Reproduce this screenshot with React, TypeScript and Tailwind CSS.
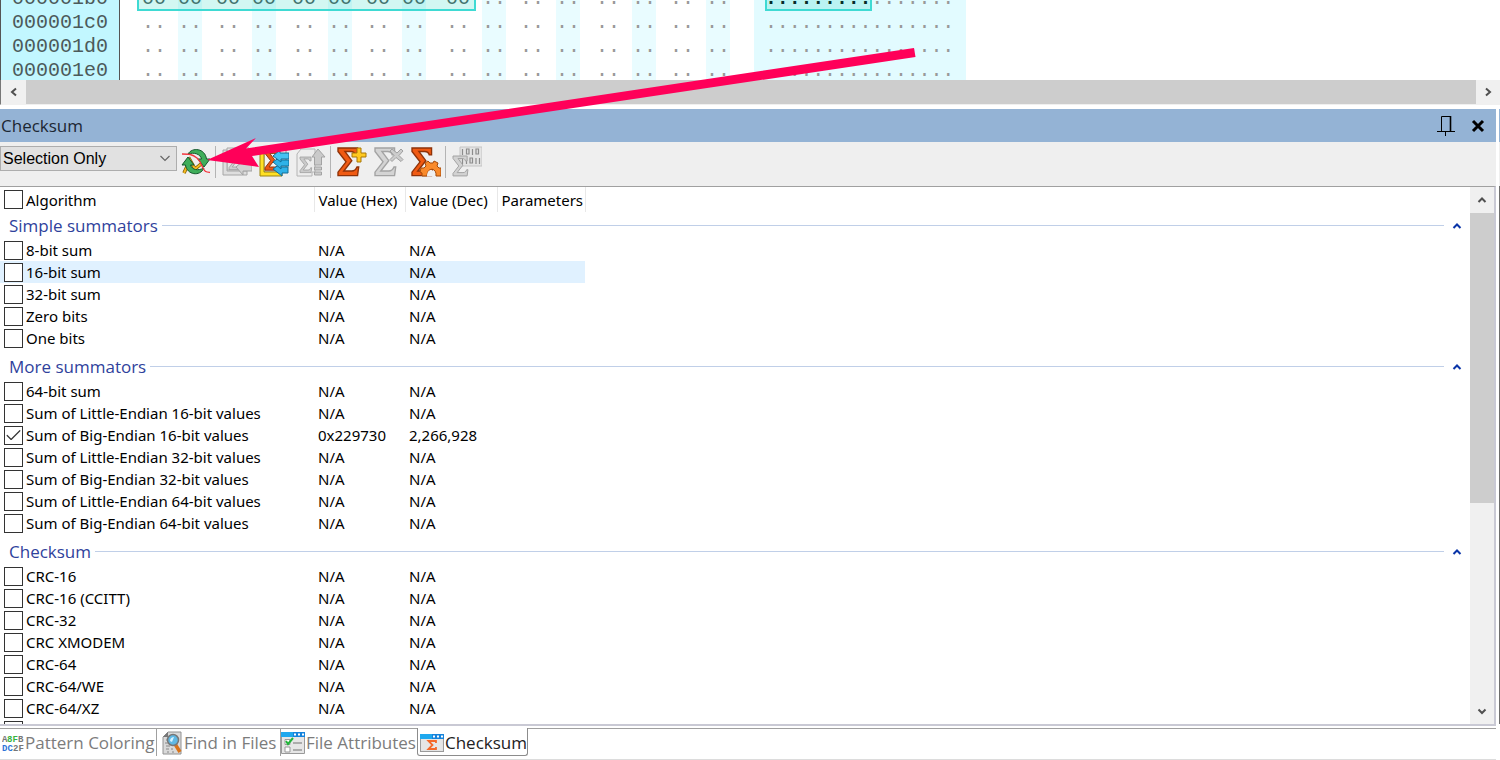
import { useState } from "react";
import type { ReactNode } from "react";
import { Check } from "lucide-react";

type Algorithm = {
  name: string;
  hex?: string;
  dec?: string;
  hot?: boolean;
};

type Group = {
  title: string;
  items: Algorithm[];
};

const groups: Group[] = [
  {
    title: "Simple summators",
    items: [
      { name: "8-bit sum" },
      { name: "16-bit sum", hot: true },
      { name: "32-bit sum" },
      { name: "Zero bits" },
      { name: "One bits" },
    ],
  },
  {
    title: "More summators",
    items: [
      { name: "64-bit sum" },
      { name: "Sum of Little-Endian 16-bit values" },
      { name: "Sum of Big-Endian 16-bit values", hex: "0x229730", dec: "2,266,928" },
      { name: "Sum of Little-Endian 32-bit values" },
      { name: "Sum of Big-Endian 32-bit values" },
      { name: "Sum of Little-Endian 64-bit values" },
      { name: "Sum of Big-Endian 64-bit values" },
    ],
  },
  {
    title: "Checksum",
    items: [
      { name: "CRC-16" },
      { name: "CRC-16 (CCITT)" },
      { name: "CRC-32" },
      { name: "CRC XMODEM" },
      { name: "CRC-64" },
      { name: "CRC-64/WE" },
      { name: "CRC-64/XZ" },
      { name: "" },
    ],
  },
];

const offsets = ["000001b0", "000001c0", "000001d0", "000001e0"];
const SELECTED_BYTES = 9;

/* ---------- hex view ---------- */

function BytePair({ row, index }: { row: number; index: number }) {
  const first = index * 2;
  const cell = (n: number) => (row === 0 && n < SELECTED_BYTES ? "00" : "..");
  const tone = (n: number) => (row === 0 && n < SELECTED_BYTES ? "text-[#4c5a5a]" : "text-[#999999]");

  return (
    <div className="flex gap-3">
      <span className={`w-6 ${tone(first)}`}>{cell(first)}</span>
      <span className={`w-6 bg-[#e9fcff] ${tone(first + 1)}`}>{cell(first + 1)}</span>
    </div>
  );
}

function HexRow({ row }: { row: number }) {
  return (
    <div className="flex h-6 leading-6">
      <span className="w-[120px] shrink-0 border-x border-[#555555] bg-[#c2f7ff] pl-[11px] text-[#4c5a5a]">
        {offsets[row]}
      </span>
      <div className="relative ml-[22px] flex shrink-0 gap-5">
        {[0, 1].map((half) => (
          <div key={half} className="flex gap-4">
            {[0, 1].map((quad) => (
              <div key={quad} className="flex gap-3.5">
                <BytePair row={row} index={half * 4 + quad * 2} />
                <BytePair row={row} index={half * 4 + quad * 2 + 1} />
              </div>
            ))}
          </div>
        ))}
        {row === 0 && (
          <div className="absolute -left-[5px] top-0 h-6 w-[339px] border-2 border-[#3fdad3] bg-[#20d5bd]/20" />
        )}
      </div>
      <div className="ml-6 shrink-0 bg-[#e2fbff] pl-[11px] pr-3">
        <div className="relative grid w-[189px] grid-cols-16 text-center text-[#999999]">
          {Array.from({ length: 16 }, (_, i) => (
            <span key={i} className={row === 0 && i < SELECTED_BYTES ? "font-bold text-black" : ""}>
              .
            </span>
          ))}
          {row === 0 && (
            <div className="absolute left-0 top-0 h-6 w-[107px] border-2 border-[#3fdad3] bg-[#20d5bd]/20" />
          )}
        </div>
      </div>
    </div>
  );
}

function Caret({ dir, className }: { dir: "left" | "right" | "up" | "down"; className?: string }) {
  const d = {
    left: "M7 1.500 3 5l4 3.500",
    right: "M3 1.500 7 5 3 8.500",
    up: "M1.500 7 5 3.500 8.500 7",
    down: "M1.500 3.500 5 7l3.500-3.500",
  }[dir];
  return (
    <svg viewBox="0 0 10 10" className={className ?? "size-2.5"} fill="none" stroke="currentColor" strokeWidth="2">
      <path d={d} />
    </svg>
  );
}

function HexView() {
  return (
    <div className="shrink-0">
      <div className="h-20 overflow-hidden font-['Liberation_Mono',monospace] text-[20px]">
        <div className="-mt-[13px]">
          {offsets.map((offset, row) => (
            <HexRow key={offset} row={row} />
          ))}
        </div>
      </div>
      <div className="flex h-[25px] border-b border-l border-b-[#f0f0f0] border-l-[#777777] bg-[#f0f0f0] text-[#505050]">
        <button type="button" aria-label="Scroll left" className="flex w-[25px] items-center justify-center">
          <Caret dir="left" />
        </button>
        <div className="flex-1 bg-[#cdcdcd]" />
        <button type="button" aria-label="Scroll right" className="flex w-6 items-center justify-center">
          <Caret dir="right" />
        </button>
      </div>
    </div>
  );
}

/* ---------- toolbar icons ---------- */

const SIGMA = "M0 0H17V6H15C14.500 3.500 13 3 11 3H6L12 11 5 20H12C14.500 20 15.500 19 16.500 16.500H18L17 24H0V21L7 12 0 3Z";

function Sigma({ x, y, scale, fill, stroke }: { x: number; y: number; scale: number; fill: string; stroke: string }) {
  return (
    <path d={SIGMA} transform={`translate(${x} ${y}) scale(${scale})`} fill={fill} stroke={stroke} strokeWidth="1.200" />
  );
}

function IconBox({ children }: { children: ReactNode }) {
  return (
    <svg viewBox="0 0 30 32" className="h-8 w-[30px]" fill="none">
      {children}
    </svg>
  );
}

function RecalculateIcon() {
  return (
    <IconBox>
      <path d="M3 27 9 14l5 9 6-5" stroke="#7a5a00" strokeWidth="3.500" />
      <path d="M3 27 9 14l5 9 6-5" stroke="#f5b921" strokeWidth="2" />
      <path d="M7 8C11 1 24 2 25.500 13H29l-6 8-6-8h3.500C19.500 8 13 6 7 8Z" fill="#3fae5a" stroke="#14572c" />
      <path d="M23 22C19 31 6 29 4.500 19H1l6-8 6 8H9.500C11 24 17 25 23 22Z" fill="#3fae5a" stroke="#14572c" />
      <path d="M1 8c7 0 10 0 15 4 4 4 4 6 6 10s3 4 7 4.500" stroke="#f2343c" strokeWidth="1.300" />
    </IconBox>
  );
}

function SelectedIcon() {
  return (
    <IconBox>
      <path d="M5 2h22v22H5z" fill="#e6e6e6" stroke="#a6a6a6" />
      <path d="M1 4h4v21h20v4H1z" fill="#dedede" stroke="#a6a6a6" />
      <Sigma x={7} y={8} scale={0.65} fill="#cecece" stroke="#9d9d9d" />
      <path d="M14 21l7-6v3h9v7h-9v4z" fill="#d2d2d2" stroke="#a3a3a3" />
    </IconBox>
  );
}

function VisibleIcon() {
  return (
    <IconBox>
      <path d="M5 2h22v24H5z" fill="#f3f3f3" stroke="#8a8a8a" />
      <path d="M1 4h4v22h18v4H1z" fill="#ffe024" stroke="#9b8414" />
      <Sigma x={6} y={5} scale={0.8} fill="#ec5614" stroke="#8d3209" />
      <path d="M14 23l7-5v3h8v6h-6v3z" fill="#2fb2e8" stroke="#136c96" />
      <path d="M14 16l7-5v3h9v6h-8v3z" fill="#2fb2e8" stroke="#136c96" />
      <path d="M14 10l7-6v3h9v6h-8v3z" fill="#45c2f2" stroke="#136c96" />
    </IconBox>
  );
}

function ExportIcon() {
  return (
    <IconBox>
      <path d="M1 8l4-5h14v23h-3v4H1z" fill="#ededed" stroke="#b4b4b4" />
      <Sigma x={4} y={11} scale={0.65} fill="#cacaca" stroke="#9d9d9d" />
      <path d="M16 11l6-8 7 8h-3.500v8h-7v-8zM18.500 21h7v3h-7zM18.500 26h7v3h-7z" fill="#cacaca" stroke="#a3a3a3" />
    </IconBox>
  );
}

function AddIcon() {
  return (
    <IconBox>
      <Sigma x={1} y={2} scale={1.15} fill="#f05a12" stroke="#8e3208" />
      <path d="M20 2h4v5h5v4h-5v5h-4v-5h-5V7h5z" fill="#ffc91f" stroke="#a87708" />
    </IconBox>
  );
}

function RemoveIcon() {
  return (
    <IconBox>
      <Sigma x={1} y={2} scale={1.15} fill="#d4d4d4" stroke="#a3a3a3" />
      <path d="M16 5l2-2 5 4 4-4 2 2-4 4.500 4 4-2 2-5-4-4 4-2-2 4-4z" fill="#cccccc" stroke="#a0a0a0" />
    </IconBox>
  );
}

function OptionsIcon() {
  return (
    <IconBox>
      <Sigma x={1} y={2} scale={1.15} fill="#f05a12" stroke="#8e3208" />
      <path
        d="M11 30v-3l-2-1 1-4 3 0 2-2-1-3 3-2 2 2h3l1-2 4 2-1 3 2 2 2 0v8h-5c1-9-9-9-9 0z"
        fill="#f98a2b"
        stroke="#a54a0a"
      />
      <path d="M16 30c0-8 8-8 8 0z" fill="#efefef" />
    </IconBox>
  );
}

function DigestIcon() {
  return (
    <IconBox>
      <path d="M8 1h22v19H8z" fill="#e4e4e4" stroke="#c4c4c4" />
      <path
        d="M10.500 3v6M14.500 3h2.500v5h-2.500zM20.500 3v6M24 3h2.500v5H24zM10.500 12v6M14.500 12v6M18 12h2.500v5H18zM24 12v6M27.500 12v6"
        stroke="#8c8c8c"
        strokeWidth="1.200"
      />
      <Sigma x={1} y={10} scale={0.83} fill="#d2d2d2" stroke="#a3a3a3" />
    </IconBox>
  );
}

function ToolButton({ label, children }: { label: string; children: ReactNode }) {
  return (
    <button type="button" aria-label={label} className="h-8 w-[30px] shrink-0">
      {children}
    </button>
  );
}

function Separator() {
  return <div className="ml-1 mr-1.5 h-8 w-px bg-[#b4b4b4]" />;
}

function Toolbar() {
  return (
    <div className="flex h-[44px] shrink-0 items-start bg-[#efefef] pt-1">
      <div className="relative mr-1 w-[177px] shrink-0">
        <select
          aria-label="Checksum scope"
          className="h-[25px] w-full appearance-none border border-[#adadad] bg-[#e1e1e1] pl-[2px] font-['Liberation_Sans',sans-serif] text-[16px] text-black"
        >
          <option>Selection Only</option>
        </select>
        <svg
          viewBox="0 0 12 12"
          className="pointer-events-none absolute right-1.5 top-1.5 size-3"
          fill="none"
          stroke="#666666"
          strokeWidth="1.200"
        >
          <path d="M1.500 4l4.500 4.500L10.500 4" />
        </svg>
      </div>
      <ToolButton label="Recalculate">
        <RecalculateIcon />
      </ToolButton>
      <Separator />
      <div className="flex gap-[7px]">
        <ToolButton label="Calculate selected">
          <SelectedIcon />
        </ToolButton>
        <ToolButton label="Calculate all">
          <VisibleIcon />
        </ToolButton>
        <ToolButton label="Export">
          <ExportIcon />
        </ToolButton>
      </div>
      <Separator />
      <div className="flex gap-[7px]">
        <ToolButton label="Add algorithm">
          <AddIcon />
        </ToolButton>
        <ToolButton label="Remove algorithm">
          <RemoveIcon />
        </ToolButton>
        <ToolButton label="Algorithm options">
          <OptionsIcon />
        </ToolButton>
      </div>
      <Separator />
      <ToolButton label="Copy digest">
        <DigestIcon />
      </ToolButton>
    </div>
  );
}

/* ---------- algorithm list ---------- */

function CheckRow({ name, checked, onToggle }: { name: string; checked: boolean; onToggle: () => void }) {
  return (
    <label className="flex h-[22px] items-center gap-[3px] pl-1">
      <span className="grid size-[19px] shrink-0 place-items-center">
        <input
          type="checkbox"
          aria-label={name || "More algorithms"}
          checked={checked}
          onChange={onToggle}
          className="col-start-1 row-start-1 size-[19px] appearance-none border border-[#333333] bg-white"
        />
        {checked && (
          <Check
            className="pointer-events-none col-start-1 row-start-1 size-[19px] text-[#333333]"
            strokeWidth={1.5}
          />
        )}
      </span>
      <span>{name}</span>
    </label>
  );
}

function AlgorithmTable() {
  const [checked, setChecked] = useState<string[]>(["Sum of Big-Endian 16-bit values"]);

  const toggle = (name: string) =>
    setChecked((list) => (list.includes(name) ? list.filter((item) => item !== name) : [...list, name]));

  return (
    <table className="w-full table-fixed border-collapse whitespace-nowrap text-left font-['Noto_Sans',sans-serif] text-[15px] leading-[22px] text-black">
      <colgroup>
        <col className="w-[314px]" />
        <col className="w-[91px]" />
        <col className="w-[92px]" />
        <col className="w-[88px]" />
        <col />
      </colgroup>
      <thead>
        <tr className="h-[25px]">
          <th className="border-r border-[#e8e8e8] p-0 font-normal">
            <CheckRow name="Algorithm" checked={false} onToggle={() => setChecked([])} />
          </th>
          <th className="border-r border-[#e8e8e8] p-0 pl-1 font-normal">Value (Hex)</th>
          <th className="border-r border-[#e8e8e8] p-0 pl-1 font-normal">Value (Dec)</th>
          <th className="border-r border-[#e8e8e8] p-0 pl-1 font-normal">Parameters</th>
          <td />
        </tr>
      </thead>
      {groups.map((group, index) => (
        <tbody key={group.title}>
          <tr>
            <th colSpan={5} className={index === 0 ? "p-0 font-normal" : "p-0 pt-1 font-normal"}>
              <div className="flex h-[27px] items-center gap-1 pl-[9px] pr-2">
                <span className="font-['Open_Sans',sans-serif] text-[17px] text-[#2f429c]">{group.title}</span>
                <span className="mr-1 h-px flex-1 bg-[#c0cfe8]" />
                <button type="button" aria-label={`Collapse ${group.title}`} className="text-[#0a35a8]">
                  <Caret dir="up" />
                </button>
              </div>
            </th>
          </tr>
          {group.items.map((item) => {
            const tone = item.hot ? "bg-[#e0f1ff] p-0" : "p-0";
            return (
              <tr key={item.name}>
                <td className={tone}>
                  <CheckRow name={item.name} checked={checked.includes(item.name)} onToggle={() => toggle(item.name)} />
                </td>
                <td className={`${tone} pl-1`}>{item.name && (item.hex ?? "N/A")}</td>
                <td className={`${tone} pl-1`}>{item.name && (item.dec ?? "N/A")}</td>
                <td className={tone} />
                <td className="p-0" />
              </tr>
            );
          })}
        </tbody>
      ))}
    </table>
  );
}

/* ---------- bottom tabs ---------- */

function PatternIcon() {
  return (
    <svg viewBox="0 0 22 18" className="h-[18px] w-[22px]" fontFamily="Liberation Mono, monospace" fontSize="9" fontWeight="bold">
      <text x="0" y="8" fill="#777777">A</text>
      <text x="5" y="8" fill="#35b43f">8F</text>
      <text x="16" y="8" fill="#777777">B</text>
      <text x="0" y="17" fill="#2f74d8">DC</text>
      <text x="11" y="17" fill="#777777">2F</text>
    </svg>
  );
}

function FindIcon() {
  return (
    <svg viewBox="0 0 20 24" className="h-6 w-5" fill="none">
      <path d="M6 1h13v22H1V6z" fill="#d9d9d9" stroke="#929292" />
      <path d="M1 6 6 1v5z" fill="#777777" />
      <path d="M4 9h3M3 12h3M4 15h4M4 18h3M9 18h2M5 21h2M10 21h2" stroke="#888888" />
      <path d="M13 13l5 8" stroke="#d9731a" strokeWidth="3.500" />
      <circle cx="11" cy="9" r="5.500" fill="#5fb8e4" stroke="#777777" strokeWidth="1.500" />
      <path d="M8 10c0-3 2-4 4-4l-2 5z" fill="#d5f1ff" />
    </svg>
  );
}

function WindowFrame({ children }: { children: ReactNode }) {
  return (
    <>
      <path d="M.5.5h23v21H.5z" fill="#e6e6e6" stroke="#9a9a9a" />
      <path d="M0 0h24v5H0z" fill="#1583dc" />
      <path d="M0 0h12v5H0z" fill="#1fa8ee" />
      <path d="M13 2.500h2M17 2.500h2M21 2.500h2" stroke="white" strokeWidth="2" />
      {children}
    </>
  );
}

function AttributesIcon() {
  return (
    <svg viewBox="0 0 24 22" className="h-[22px] w-6" fill="none">
      <WindowFrame>
        <path d="M4 7.500h5v5H4zM4 15h5v5H4z" fill="white" stroke="#999999" />
        <path d="M12 11h9M12 18h9" stroke="#999999" strokeWidth="1.500" />
        <path d="M5 9l2 3 5-6" stroke="#21b53a" strokeWidth="2" />
      </WindowFrame>
    </svg>
  );
}

function ChecksumIcon() {
  return (
    <svg viewBox="0 0 24 18" className="h-[18px] w-6" fill="none">
      <WindowFrame>
        <path d="M16 9V7H8.500l4 4-4 4H16v-2" stroke="#f4682a" strokeWidth="1.800" />
        <path d="M0 17.500h24" stroke="#9a9a9a" />
      </WindowFrame>
    </svg>
  );
}

function Tab({ label, icon, className }: { label: string; icon: ReactNode; className: string }) {
  return (
    <button type="button" className={`flex h-7 shrink-0 items-center whitespace-nowrap ${className}`}>
      {icon}
      {label}
    </button>
  );
}

function BottomTabs() {
  return (
    <div className="flex h-8 shrink-0 border-b border-[#dcdcdc] font-['Open_Sans',sans-serif] text-[17px] text-[#7c7c7c]">
      <Tab label="Pattern Coloring" icon={<PatternIcon />} className="w-[157px] gap-px border-r border-t border-[#a0a0a0] pl-0.5 pt-px" />
      <Tab label="Find in Files" icon={<FindIcon />} className="w-[124px] gap-0.5 border-r border-t border-[#a0a0a0] pl-[5px] pt-px" />
      <Tab label="File Attributes" icon={<AttributesIcon />} className="w-[136px] gap-px border-t border-[#a0a0a0] pt-px" />
      <Tab
        label="Checksum"
        icon={<ChecksumIcon />}
        className="w-[111px] gap-px rounded-b-[3px] border-x border-b border-[#8c8c8c] bg-white pl-0.5 pt-[3px] text-[#222222]"
      />
      <div className="flex-1 border-t border-[#a0a0a0]" />
    </div>
  );
}

function ChecksumPanel() {
  return (
    <section className="flex min-w-0 flex-1 flex-col">
      <header className="flex h-[33px] shrink-0 items-center bg-[#94b3d5] pl-px pr-[11px] pt-px">
        <h1 className="flex-1 font-['Open_Sans',sans-serif] text-[17px] text-[#1c2733]">Checksum</h1>
        <button type="button" aria-label="Auto hide" className="mr-4">
          <svg viewBox="0 0 18 20" className="h-5 w-[18px]" fill="none" stroke="black">
            <path d="M4.500 15V.5h9V15M0 15.500h18M8.500 15v5" />
            <path d="M13.500 0v15" strokeWidth="1.600" />
          </svg>
        </button>
        <button type="button" aria-label="Close">
          <svg viewBox="0 0 14 14" className="size-3.5" fill="none" stroke="black" strokeWidth="3">
            <path d="M2 2l10 10M12 2 2 12" />
          </svg>
        </button>
      </header>
      <Toolbar />
      <div className="mb-0.5 flex min-h-0 flex-1 border-b-2 border-r-2 border-t border-b-[#c9c9d4] border-r-[#c9c9d4] border-t-[#a0a0a0]">
        <div className="min-w-0 flex-1 overflow-hidden">
          <AlgorithmTable />
        </div>
        <div className="flex w-6 shrink-0 flex-col bg-[#f0f0f0] text-[#505050]">
          <button type="button" aria-label="Scroll up" className="flex h-[26px] items-center justify-center">
            <Caret dir="up" />
          </button>
          <div className="h-[54%] bg-[#cdcdcd]" />
          <button type="button" aria-label="Scroll down" className="mt-auto flex h-[26px] items-center justify-center">
            <Caret dir="down" />
          </button>
        </div>
      </div>
      <BottomTabs />
    </section>
  );
}

export default function App() {
  return (
    <main className="relative flex h-screen flex-col overflow-hidden bg-white">
      <HexView />
      <div className="mt-1 flex min-h-0 flex-1">
        <ChecksumPanel />
        {/* edge of the neighbouring docked pane */}
        <div className="ml-[3px] flex w-px flex-col">
          <div className="h-[33px] bg-[#94b3d5]" />
          <div className="h-[44px] bg-[#efefef]" />
          <div className="mb-9 flex-1 bg-[#6e6e6e]" />
        </div>
      </div>
      <svg className="pointer-events-none absolute left-0 top-0 h-[180px] w-[930px]" viewBox="0 0 930 180">
        <path d="M207 160 256 138 246 148.500 914 48 915.500 57 252 156 259 167Z" fill="#ff0059" />
      </svg>
    </main>
  );
}
